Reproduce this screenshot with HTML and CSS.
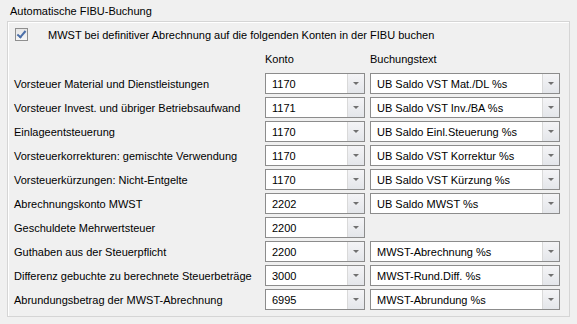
FILE: index.html
```html
<!DOCTYPE html>
<html lang="de">

<head>
	<meta name="viewport" content="width=device-width, initial-scale=1">
	<title>Automatische FIBU-Buchung</title>
	<link rel="stylesheet" href="styles.css">
</head>

<body>
	<div class="title">Automatische FIBU-Buchung</div>
	<section class="panel">
		<label class="check-row">
			<span class="checkbox checked"></span>
			<span>MWST bei definitiver Abrechnung auf die folgenden Konten in der FIBU buchen</span>
		</label>
		<div class="grid">
			<span></span>
			<span class="head">Konto</span>
			<span class="head">Buchungstext</span>

			<span class="label">Vorsteuer Material und Dienstleistungen</span>
			<div class="combo"><span class="value">1170</span><span class="btn"></span></div>
			<div class="combo"><span class="value">UB Saldo VST Mat./DL %s</span><span class="btn"></span></div>

			<span class="label">Vorsteuer Invest. und übriger Betriebsaufwand</span>
			<div class="combo"><span class="value">1171</span><span class="btn"></span></div>
			<div class="combo"><span class="value">UB Saldo VST Inv./BA %s</span><span class="btn"></span></div>

			<span class="label">Einlageentsteuerung</span>
			<div class="combo"><span class="value">1170</span><span class="btn"></span></div>
			<div class="combo"><span class="value">UB Saldo Einl.Steuerung %s</span><span class="btn"></span></div>

			<span class="label">Vorsteuerkorrekturen: gemischte Verwendung</span>
			<div class="combo"><span class="value">1170</span><span class="btn"></span></div>
			<div class="combo"><span class="value">UB Saldo VST Korrektur %s</span><span class="btn"></span></div>

			<span class="label">Vorsteuerkürzungen: Nicht-Entgelte</span>
			<div class="combo"><span class="value">1170</span><span class="btn"></span></div>
			<div class="combo"><span class="value">UB Saldo VST Kürzung %s</span><span class="btn"></span></div>

			<span class="label">Abrechnungskonto MWST</span>
			<div class="combo"><span class="value">2202</span><span class="btn"></span></div>
			<div class="combo"><span class="value">UB Saldo MWST %s</span><span class="btn"></span></div>

			<span class="label">Geschuldete Mehrwertsteuer</span>
			<div class="combo"><span class="value">2200</span><span class="btn"></span></div>
			<span></span>

			<span class="label">Guthaben aus der Steuerpflicht</span>
			<div class="combo"><span class="value">2200</span><span class="btn"></span></div>
			<div class="combo"><span class="value">MWST-Abrechnung %s</span><span class="btn"></span></div>

			<span class="label">Differenz gebuchte zu berechnete Steuerbeträge</span>
			<div class="combo"><span class="value">3000</span><span class="btn"></span></div>
			<div class="combo"><span class="value">MWST-Rund.Diff. %s</span><span class="btn"></span></div>

			<span class="label">Abrundungsbetrag der MWST-Abrechnung</span>
			<div class="combo"><span class="value">6995</span><span class="btn"></span></div>
			<div class="combo"><span class="value">MWST-Abrundung %s</span><span class="btn"></span></div>
		</div>
	</section>
</body>

</html>
```

FILE: styles.css
```css
html,
body {
	margin: 0;
	background-color: #f0f0f0;
	color: #000;
	font-family: "Liberation Sans", Arial, sans-serif;
	font-size: 11px;
}

.title {
	height: 21px;
	line-height: 22px;
	padding-left: 10px;
	box-sizing: border-box;
}

.panel {
	margin: 0 7px;
	height: 296px;
	box-sizing: border-box;
	border: 1px solid #d5d5d5;
	box-shadow: inset 1px 1px 0 #fff;
	padding: 6px 6px 0 6px;
}

.check-row {
	display: flex;
	align-items: center;
	gap: 20px;
	height: 13px;
	padding-left: 1px;
}

.checkbox {
	width: 13px;
	height: 13px;
	box-sizing: border-box;
	border: 1px solid #8f8f8f;
	background: linear-gradient(#e6e6e6, #f6f6f6);
	position: relative;
}

.checkbox.checked:after {
	content: "";
	position: absolute;
	left: 3px;
	top: 0px;
	width: 3px;
	height: 7px;
	border: solid #4a6ea8;
	border-width: 0 2px 2px 0;
	transform: rotate(40deg);
}

.grid {
	display: grid;
	grid-template-columns: 246px 100px 190px;
	grid-template-rows: 19px;
	grid-auto-rows: 21px;
	row-gap: 3px;
	column-gap: 5px;
	margin-top: 10px;
}

.head {
	line-height: 16px;
}

.label {
	display: flex;
	align-items: center;
	white-space: nowrap;
}

.combo {
	display: flex;
	border: 1px solid #8c8c8c;
	background-color: #fff;
}

.combo .value {
	flex: 1;
	display: flex;
	align-items: center;
	padding-left: 6px;
	white-space: nowrap;
	overflow: hidden;
}

.combo .btn {
	width: 16px;
	border-left: 1px solid #d9d9d9;
	background: linear-gradient(#f4f4f6, #e4e6ea);
	display: flex;
	align-items: center;
	justify-content: center;
}

.combo .btn:after {
	content: "";
	border-top: 3px solid #707070;
	border-left: 3px solid transparent;
	border-right: 3px solid transparent;
}
```
